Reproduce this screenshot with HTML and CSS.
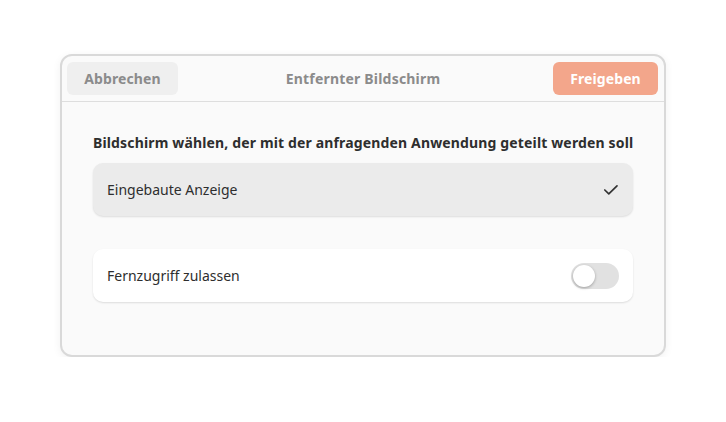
FILE: index.html
```html
<!DOCTYPE html>
<html lang="de">
<head>
    <meta charset="UTF-8">
    <meta name="viewport" content="width=device-width, initial-scale=1.0">
    <title>Entfernter Bildschirm</title>
    <link rel="stylesheet" href="styles.css">
</head>
<body>
    <div class="dialog">
        <div class="headerbar">
            <button class="btn btn-cancel">Abbrechen</button>
            <span class="title">Entfernter Bildschirm</span>
            <button class="btn btn-share">Freigeben</button>
        </div>

        <div class="content">
            <h2 class="heading">Bildschirm wählen, der mit der anfragenden Anwendung geteilt werden soll</h2>

            <div class="row row-selected">
                <span>Eingebaute Anzeige</span>
                <svg class="check" width="16" height="16" viewBox="0 0 16 16">
                    <path d="M1.8 8 L5.8 11.8 L14 3.8" fill="none" stroke="#333" stroke-width="1.7" stroke-linecap="round" stroke-linejoin="round"/>
                </svg>
            </div>

            <div class="row row-switch">
                <span>Fernzugriff zulassen</span>
                <div class="switch"><div class="knob"></div></div>
            </div>
        </div>
    </div>
</body>
</html>
```

FILE: styles.css
```css
body {
    font-family: 'Noto Sans', 'Open Sans', sans-serif;
    margin: 0;
    padding: 54px 0 0 60px;
    background-color: #ffffff;
}

.dialog {
    width: 606px;
    height: 303px;
    box-sizing: border-box;
    border: 2px solid #d9d9d9;
    border-radius: 12px;
    background-color: #fafafa;
    box-shadow: 0 2px 8px rgba(0, 0, 0, 0.06);
    overflow: hidden;
}

.headerbar {
    height: 45px;
    display: flex;
    align-items: center;
    justify-content: space-between;
    padding: 0 6px 0 5px;
    border-bottom: 1px solid #dedede;
}

.btn {
    height: 33px;
    border: none;
    border-radius: 6px;
    font-family: inherit;
    font-size: 14px;
    font-weight: bold;
    letter-spacing: 0.1px;
    cursor: pointer;
}

.btn-cancel {
    width: 111px;
    background-color: #efefef;
    color: #8b8b8b;
}

.btn-share {
    width: 105px;
    background-color: #f3a68b;
    color: #ffffff;
}

.title {
    font-size: 14px;
    font-weight: bold;
    letter-spacing: 0.2px;
    color: #8b8b8b;
    margin-right: 5px;
}

.content {
    padding: 31px 31px 0 31px;
}

.heading {
    margin: 0 0 10px 0;
    font-size: 14px;
    font-weight: bold;
    line-height: 20px;
    color: #2e2e2e;
    letter-spacing: 0.15px;
    white-space: nowrap;
}

.row {
    height: 53px;
    box-sizing: border-box;
    display: flex;
    align-items: center;
    justify-content: space-between;
    padding: 0 14px;
    border-radius: 10px;
    font-size: 14px;
    color: #2e2e2e;
    box-shadow: 0 1px 2px rgba(0, 0, 0, 0.12);
}

.row-selected {
    background-color: #ebebeb;
}

.row-switch {
    margin-top: 33px;
    background-color: #ffffff;
}

.switch {
    width: 48px;
    height: 26px;
    border-radius: 13px;
    background-color: #e1e1e1;
    display: flex;
    align-items: center;
    padding: 0 2px;
    box-sizing: border-box;
}

.knob {
    width: 22px;
    height: 22px;
    border-radius: 50%;
    background-color: #ffffff;
    box-shadow: 0 1px 3px rgba(0, 0, 0, 0.3);
}
```
